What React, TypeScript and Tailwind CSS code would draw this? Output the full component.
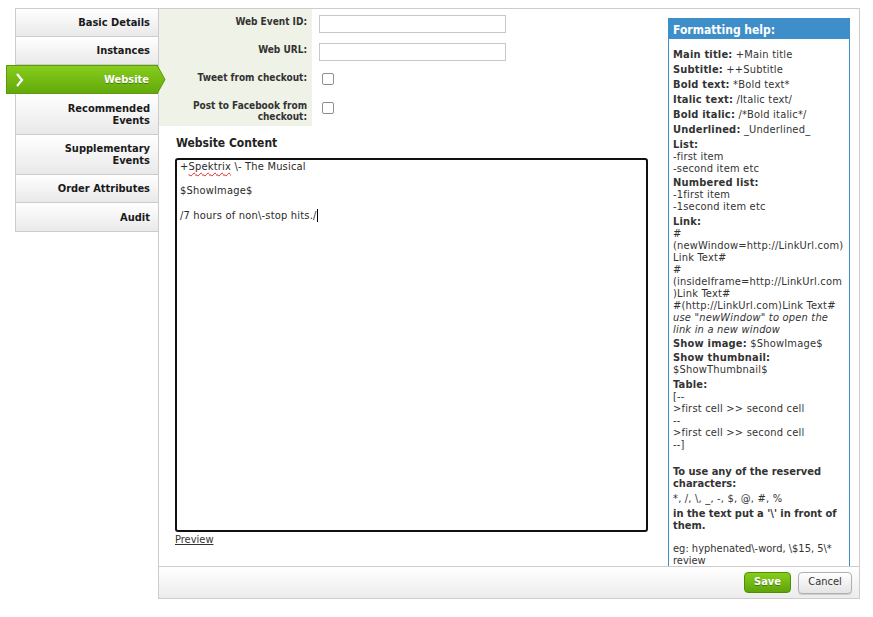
import React from "react";

const navItems = [
  { label: ["Basic Details"], h: "h-[28px]" },
  { label: ["Instances"], h: "h-[28px]" },
  { label: ["Website"], h: "h-[29px]", active: true },
  { label: ["Recommended", "Events"], h: "h-[41px]" },
  { label: ["Supplementary", "Events"], h: "h-[40px]" },
  { label: ["Order Attributes"], h: "h-[28px]" },
  { label: ["Audit"], h: "h-[29px]" },
];

const SideNav: React.FC = () => (
  <nav className="w-[143px] self-start border-l border-t border-[#cccccc] flex flex-col">
    {navItems.map((item, index) =>
      item.active ? (
        <div
          key={index}
          className={`relative -ml-[10px] w-[152px] ${item.h} flex items-center justify-end pr-[8px] pt-[1px] border border-[#5b9b0b] bg-linear-to-b from-[#86cd1c] to-[#63a90a] text-white font-bold [text-shadow:0_1px_0_rgba(0,0,0,0.35)]`}
        >
          <svg className="absolute left-[8px] top-[7px]" width="9" height="14" viewBox="0 0 9 14">
            <path d="M2 1 L7 7 L2 13" stroke="white" strokeWidth="2.2" fill="none" />
          </svg>
          {item.label[0]}
          <svg className="absolute -right-[9px] -top-[1px]" width="9" height="29" viewBox="0 0 9 29">
            <defs>
              <linearGradient id="navArrow" x1="0" y1="0" x2="0" y2="1">
                <stop offset="0" stopColor="#86cd1c" />
                <stop offset="1" stopColor="#63a90a" />
              </linearGradient>
            </defs>
            <path d="M0 0 L8 14.5 L0 29 Z" fill="url(#navArrow)" />
            <path d="M0 0 L8 14.5 L0 29" fill="none" stroke="#5b9b0b" strokeWidth="1" />
          </svg>
        </div>
      ) : (
        <div
          key={index}
          className={`${item.h} flex flex-col justify-center items-end pr-[8px] pt-[1px] border-b border-[#cccccc] bg-linear-to-b from-[#ffffff] to-[#e9e9e9] font-bold text-[#1a1a1a] leading-[12px] text-right`}
        >
          {item.label.map((line) => (
            <span key={line}>{line}</span>
          ))}
        </div>
      )
    )}
  </nav>
);

const Checkbox: React.FC = () => (
  <span className="block w-[12px] h-[12px] rounded-[2px] border border-[#8f8f8f] bg-white" />
);

const FormRows: React.FC = () => (
  <div className="grid grid-cols-[153px_1fr] text-[10px]">
    {/* Web Event ID */}
    <div className="h-[27px] bg-[#eff2e6] text-right pr-[5px] pt-[7px] font-bold text-[#333] leading-[12px]">
      Web Event ID:
    </div>
    <div className="h-[27px] pt-[6px] pl-[7px]">
      <div className="w-[187px] h-[18px] border border-[#c8c8c8] bg-white" />
    </div>
    {/* Web URL */}
    <div className="h-[28px] bg-[#eff2e6] text-right pr-[5px] pt-[8px] font-bold text-[#333] leading-[12px]">
      Web URL:
    </div>
    <div className="h-[28px] pt-[7px] pl-[7px]">
      <div className="w-[187px] h-[18px] border border-[#c8c8c8] bg-white" />
    </div>
    {/* Tweet */}
    <div className="h-[29px] bg-[#eff2e6] text-right pr-[5px] pt-[8px] font-bold text-[#333] leading-[12px]">
      Tweet from checkout:
    </div>
    <div className="h-[29px] pt-[9px] pl-[10px]">
      <Checkbox />
    </div>
    {/* Facebook */}
    <div className="h-[33px] bg-[#eff2e6] text-right pr-[5px] pt-[7px] font-bold text-[#333] leading-[11px]">
      Post to Facebook from
      <br />
      checkout:
    </div>
    <div className="h-[33px] pt-[9px] pl-[10px]">
      <Checkbox />
    </div>
  </div>
);

const HelpPanel: React.FC = () => (
  <aside className="w-[182px] mt-[9px] mr-[9px] border border-b-0 border-[#3d8ec9] overflow-hidden bg-white">
    <div className="h-[20px] bg-[#3d8ec9] px-[4px] pt-[4px] text-[12px] leading-[14px] font-bold text-white">
      Formatting help:
    </div>
    <div className="px-[4px] pt-[10px] text-[11px] leading-[12px] tracking-[0.2px] text-[#333] whitespace-nowrap">
      <div className="mb-[3px]">
        <b>Main title:</b> +Main title
      </div>
      <div className="mb-[3px]">
        <b>Subtitle:</b> ++Subtitle
      </div>
      <div className="mb-[3px]">
        <b>Bold text:</b> *Bold text*
      </div>
      <div className="mb-[3px]">
        <b>Italic text:</b> /Italic text/
      </div>
      <div className="mb-[3px]">
        <b>Bold italic:</b> /*Bold italic*/
      </div>
      <div className="mb-[3px]">
        <b>Underlined:</b> _Underlined_
      </div>
      <div className="mb-[2px]">
        <b>List:</b>
        <br />
        -first item
        <br />
        -second item etc
      </div>
      <div className="mb-[3px]">
        <b>Numbered list:</b>
        <br />
        -1first item
        <br />
        -1second item etc
      </div>
      <div className="mb-[2px]">
        <b>Link:</b>
        <br />
        #
        <br />
        (newWindow=http://LinkUrl.com)
        <br />
        Link Text#
        <br />
        #
        <br />
        (insideIframe=http://LinkUrl.com
        <br />
        )Link Text#
        <br />
        #(http://LinkUrl.com)Link Text#
        <br />
        <i>
          use "newWindow" to open the
          <br />
          link in a new window
        </i>
      </div>
      <div className="mb-[2px]">
        <b>Show image:</b> $ShowImage$
      </div>
      <div className="mb-[3px]">
        <b>Show thumbnail:</b>
        <br />
        $ShowThumbnail$
      </div>
      <div className="mb-[15px]">
        <b>Table:</b>
        <br />
        [--
        <br />
        &gt;first cell &gt;&gt; second cell
        <br />
        --
        <br />
        &gt;first cell &gt;&gt; second cell
        <br />
        --]
      </div>
      <div className="mb-[3px] font-bold tracking-normal">
        To use any of the reserved
        <br />
        characters:
      </div>
      <div className="mb-[3px]">*, /, \, _, -, $, @, #, %</div>
      <div className="mb-[3px] font-bold tracking-normal">
        in the text put a '\' in front of
        <br />
        them.
      </div>
      <div className="mt-[11px] tracking-normal">
        eg: hyphenated\-word, \$15, 5\*
        <br />
        review
      </div>
    </div>
  </aside>
);

export default function App() {
  return (
    <div className="w-[873px] h-[617px] bg-white text-[11px] text-[#333] font-['DejaVu_Sans_Condensed','DejaVu_Sans',sans-serif] font-stretch-condensed">
      <div className="flex pt-[8px] pl-[15px]">
        <SideNav />
        <div className="w-[702px] h-[591px] border border-[#cccccc] flex flex-col">
          <div className="flex flex-1 min-h-0">
            {/* Main editing column */}
            <div className="flex-1">
              <FormRows />
              <h3 className="mt-[9px] mb-[7px] pl-[17px] h-[16px] text-[12px] leading-[16px] font-bold text-[#222]">
                Website Content
              </h3>
              <div className="ml-[16px] w-[473px] h-[374px] border-2 border-[#111] rounded-[3px] px-[3px] pt-[1px] text-[11px] leading-[12px] tracking-[0.2px] text-[#2a2a2a]">
                <div>
                  +<span className="underline decoration-wavy decoration-[#e02020] decoration-1 underline-offset-2">Spektrix</span> \- The Musical
                </div>
                <div>&nbsp;</div>
                <div>$ShowImage$</div>
                <div>&nbsp;</div>
                <div>
                  /7 hours of non\-stop hits./
                  <span className="inline-block w-px h-[13px] bg-black align-middle" />
                </div>
              </div>
              <a href="#" className="block mt-[2px] ml-[16px] w-fit leading-[12px] underline text-[#333]">
                Preview
              </a>
            </div>
            <HelpPanel />
          </div>
          {/* Footer */}
          <div className="h-[32px] shrink-0 border-t border-[#cccccc] bg-linear-to-b from-[#ffffff] to-[#ececec] flex items-center justify-end gap-[7px] pr-[7px]">
            <button className="w-[47px] h-[21px] rounded-[4px] border border-[#4e8f08] bg-linear-to-b from-[#86cd1c] to-[#5ea40a] text-white font-bold text-[11px] [text-shadow:0_1px_0_rgba(0,0,0,0.35)]">
              Save
            </button>
            <button className="w-[54px] h-[22px] rounded-[4px] border border-[#b0b0b0] bg-linear-to-b from-[#ffffff] to-[#e4e4e4] text-[#333] text-[11px] shadow-[0_1px_1px_rgba(0,0,0,0.15)]">
              Cancel
            </button>
          </div>
        </div>
      </div>
    </div>
  );
}
